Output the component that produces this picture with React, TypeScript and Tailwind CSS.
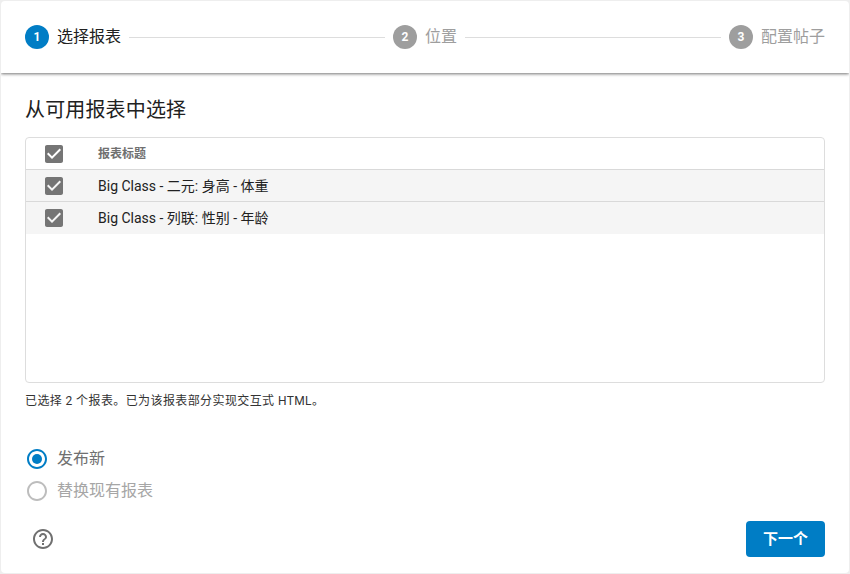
const font = 'font-["Roboto","Noto_Sans_CJK_SC",sans-serif]';

const CHECKBOX_PATH =
  'M19 3H5c-1.11 0-2 .9-2 2v14c0 1.1.89 2 2 2h14c1.11 0 2-.9 2-2V5c0-1.1-.89-2-2-2zm-9 14l-5-5 1.41-1.41L10 14.17l7.59-7.59L19 8l-9 9z';
const RADIO_PATH =
  'M12 2C6.48 2 2 6.48 2 12s4.48 10 10 10 10-4.48 10-10S17.52 2 12 2zm0 18c-4.42 0-8-3.58-8-8s3.58-8 8-8 8 3.58 8 8-3.58 8-8 8z';
const HELP_PATH =
  'M11 18h2v-2h-2v2zm1-16C6.48 2 2 6.48 2 12s4.48 10 10 10 10-4.48 10-10S17.52 2 12 2zm0 18c-4.41 0-8-3.59-8-8s3.59-8 8-8 8 3.59 8 8-3.59 8-8 8zm0-14c-2.21 0-4 1.79-4 4h2c0-1.1.9-2 2-2s2 .9 2 2c0 2-3 1.75-3 5h2c0-2.25 3-2.5 3-5 0-2.21-1.79-4-4-4z';

function Step({ n, label, active }: { n: number; label: string; active?: boolean }) {
  return (
    <div className="flex shrink-0 items-center">
      <div
        className={`flex h-6 w-6 items-center justify-center rounded-full text-xs font-bold text-white ${
          active ? 'bg-[#007dc5]' : 'bg-[#9e9e9e]'
        }`}
      >
        {n}
      </div>
      <span className={`ml-2 text-base leading-6 ${active ? 'text-[#212121]' : 'text-[#9e9e9e]'}`}>{label}</span>
    </div>
  );
}

function Row({ title, header }: { title: string; header?: boolean }) {
  return (
    <div className={`flex items-center ${header ? 'h-[31px]' : 'h-8 border-t border-[#d9d9d9] bg-[#f5f5f5] last:h-[33px]'}`}>
      <div className="flex w-[72px] pl-4">
        <svg viewBox="0 0 24 24" className="h-6 w-6 fill-[#757575]">
          <path d={CHECKBOX_PATH} />
        </svg>
      </div>
      <span className={header ? 'text-xs font-bold text-[#707070]' : 'text-sm text-[#212121]'}>{title}</span>
    </div>
  );
}

function Radio({ label, checked }: { label: string; checked?: boolean }) {
  return (
    <div className="flex h-8 items-center">
      <svg viewBox="0 0 24 24" className={`h-6 w-6 ${checked ? 'fill-[#007dc5]' : 'fill-[#bdbdbd]'}`}>
        <path d={RADIO_PATH} />
        {checked && <circle cx="12" cy="12" r="5" />}
      </svg>
      <span className={`ml-2 text-base ${checked ? 'text-[#707070]' : 'text-[#a6a6a6]'}`}>{label}</span>
    </div>
  );
}

export default function App() {
  return (
    <div className={`h-[574px] w-[850px] bg-[#eeeeee] p-[1px] ${font}`}>
      <div className="flex h-full flex-col overflow-hidden rounded bg-white">
        <div className="flex h-[72px] shrink-0 items-center px-6 shadow-[0_1px_3px_rgba(0,0,0,0.55)]">
          <Step n={1} label="选择报表" active />
          <div className="mx-2 h-px flex-1 bg-[#dddddd]" />
          <Step n={2} label="位置" />
          <div className="mx-2 h-px flex-1 bg-[#dddddd]" />
          <Step n={3} label="配置帖子" />
        </div>

        <div className="flex flex-1 flex-col px-6">
          <h1 className="mt-[23px] text-xl leading-7 font-normal tracking-[0.15px] text-[#212121]">从可用报表中选择</h1>
          <div className="mt-[13px] h-[246px] overflow-hidden rounded border border-[#dddddd]">
            <Row header title="报表标题" />
            <Row title="Big Class - 二元: 身高 - 体重" />
            <Row title="Big Class - 列联: 性别 - 年龄" />
          </div>
          <p className="mt-2.5 text-xs leading-4 tracking-[0.4px] text-[#333333]">
            已选择 2 个报表。已为该报表部分实现交互式 HTML。
          </p>
          <div className="mt-[34px]">
            <Radio checked label="发布新" />
            <Radio label="替换现有报表" />
          </div>
          <div className="mt-[14px] flex items-center justify-between">
            <svg viewBox="0 0 24 24" className="ml-1.5 h-6 w-6 fill-[#707070]">
              <path d={HELP_PATH} />
            </svg>
            <button className="h-9 w-[79px] rounded bg-[#007dc5] text-[15px] font-bold text-white">下一个</button>
          </div>
        </div>
      </div>
    </div>
  );
}
